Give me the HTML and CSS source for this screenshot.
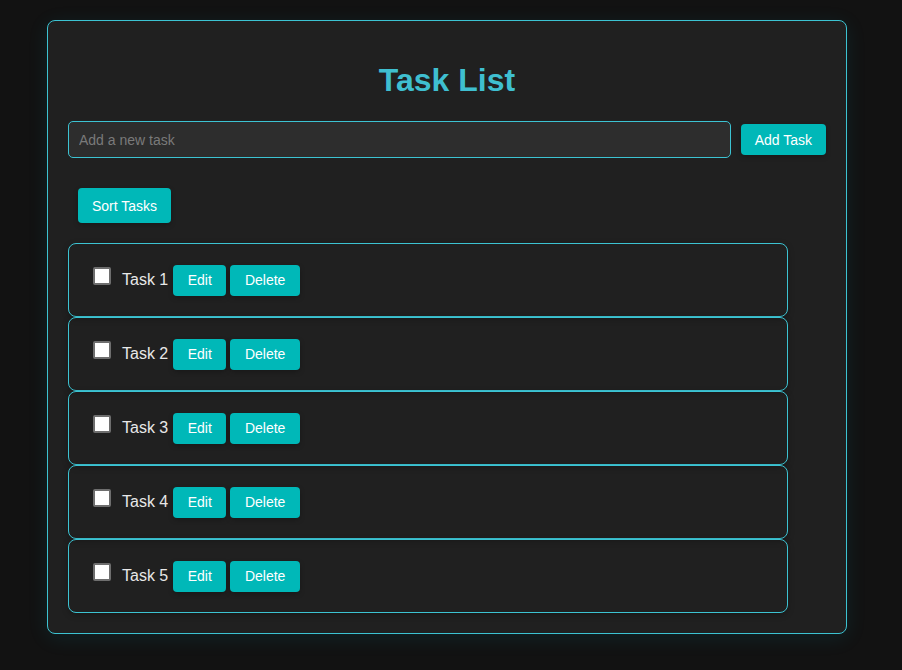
FILE: index.html
```html
<!DOCTYPE html>
<html>
<head>
<meta charset="utf-8">
<link rel="stylesheet" href="styles.css">
</head>
<body>
<div class="container">
  <h1 class="title">Task List</h1>
  <div class="input-row">
    <input class="task-input" type="text" placeholder="Add a new task">
    <button class="btn add-btn">Add Task</button>
  </div>
  <button class="btn sort-btn">Sort Tasks</button>
  <ul class="task-list">
    <li class="task"><input type="checkbox" class="check"><span class="task-text">Task 1</span><button class="btn small">Edit</button><button class="btn small">Delete</button></li>
    <li class="task"><input type="checkbox" class="check"><span class="task-text">Task 2</span><button class="btn small">Edit</button><button class="btn small">Delete</button></li>
    <li class="task"><input type="checkbox" class="check"><span class="task-text">Task 3</span><button class="btn small">Edit</button><button class="btn small">Delete</button></li>
    <li class="task"><input type="checkbox" class="check"><span class="task-text">Task 4</span><button class="btn small">Edit</button><button class="btn small">Delete</button></li>
    <li class="task"><input type="checkbox" class="check"><span class="task-text">Task 5</span><button class="btn small">Edit</button><button class="btn small">Delete</button></li>
  </ul>
</div>
</body>
</html>
```
FILE: styles.css
```css
html, body {
  margin: 0;
  padding: 0;
  background: #121212;
  font-family: "Liberation Sans", Arial, sans-serif;
  color: #e6e6e6;
}
body {
  padding: 20px 0 37px 47px;
}
.container {
  width: 800px;
  box-sizing: border-box;
  background: #202020;
  border: 1px solid #3cc3d2;
  border-radius: 8px;
  padding: 20px;
  box-shadow: 0 4px 20px rgba(0, 160, 180, 0.12);
}
.title {
  margin: 21px 0 22px;
  font-size: 32px;
  line-height: 37px;
  font-weight: bold;
  text-align: center;
  color: #3fbfd0;
}
.input-row {
  display: flex;
  align-items: center;
  gap: 10px;
  margin-bottom: 20px;
}
.task-input {
  flex: 1;
  height: 37px;
  box-sizing: border-box;
  background: #2d2d2d;
  border: 1px solid #3cc3d2;
  border-radius: 5px;
  padding: 0 10px;
  font-family: "Liberation Sans", Arial, sans-serif;
  font-size: 14px;
  color: #ddd;
  outline: none;
}
.task-input::placeholder {
  color: #7a7a7a;
}
.btn {
  background: #00b8b8;
  color: #ffffff;
  border: none;
  border-radius: 4px;
  font-family: "Liberation Sans", Arial, sans-serif;
  font-size: 14px;
  padding: 0 14px;
  height: 31px;
  cursor: pointer;
  box-shadow: 0 2px 5px rgba(0, 0, 0, 0.25);
}
.add-btn {
  flex: none;
}
.sort-btn {
  display: block;
  height: 35px;
  margin: 30px 10px 20px;
}
.task-list {
  list-style: none;
  margin: 0;
  padding: 0;
  width: 720px;
}
.task {
  display: flex;
  align-items: center;
  height: 74px;
  box-sizing: border-box;
  border: 1px solid #3cc3d2;
  border-radius: 8px;
  padding: 0 20px;
  box-shadow: 0 2px 6px rgba(0, 0, 0, 0.25);
}
.check {
  appearance: none;
  -webkit-appearance: none;
  width: 18px;
  height: 18px;
  box-sizing: border-box;
  background: #ffffff;
  border: 2px solid #6e6e6e;
  border-radius: 2px;
  margin: 0 11px 8px 4px;
}
.task-text {
  font-size: 16px;
  color: #e8e8e8;
  margin-right: 5px;
}
.small {
  padding: 0 14.5px;
  margin-right: 4px;
}
```
